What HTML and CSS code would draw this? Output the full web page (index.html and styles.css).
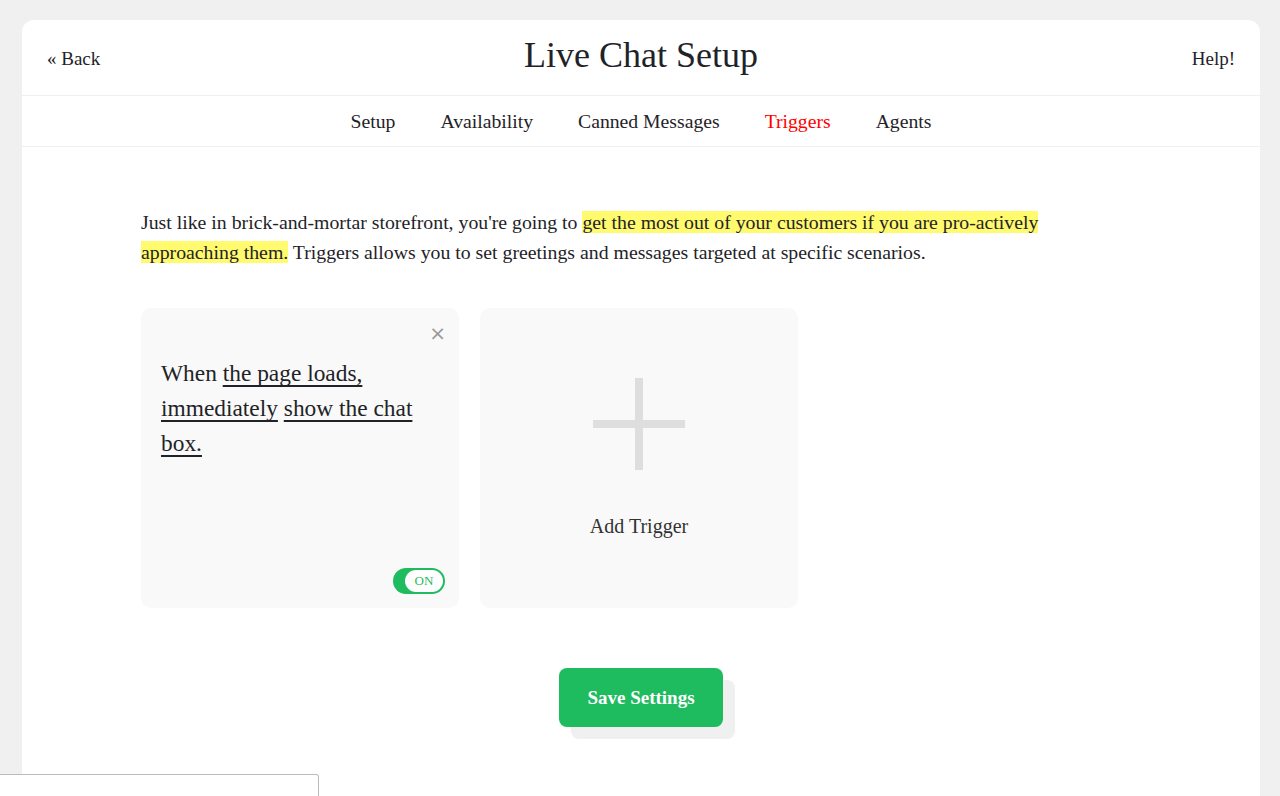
FILE: index.html
```html
<!DOCTYPE html>
<html>
<head>
<meta charset="utf-8">
<link rel="stylesheet" href="styles.css">
</head>
<body>
<div class="page">
  <div class="card">
    <header class="topbar">
      <a class="back">« Back</a>
      <h1 class="title">Live Chat Setup</h1>
      <a class="help">Help!</a>
    </header>
    <nav class="tabs">
      <a class="tab">Setup</a>
      <a class="tab">Availability</a>
      <a class="tab">Canned Messages</a>
      <a class="tab active">Triggers</a>
      <a class="tab">Agents</a>
    </nav>
    <main class="content">
      <p class="intro">Just like in brick-and-mortar storefront, you're going to <mark class="hl">get the most out of your customers if you are pro-actively</mark> <mark class="hl">approaching them.</mark> Triggers allows you to set greetings and messages targeted at specific scenarios.</p>
      <div class="triggers">
        <div class="trigger">
          <span class="close">×</span>
          <p class="rule">When <u class="ul">the page loads,</u> <u class="ul">immediately</u> <u class="ul">show the chat</u> <u class="ul">box.</u></p>
          <div class="toggle"><span class="toggle-label">ON</span></div>
        </div>
        <div class="trigger add">
          <svg class="plus" width="92" height="92" viewBox="0 0 92 92"><rect x="42" y="0" width="8" height="92" fill="#dedede"/><rect x="0" y="42" width="92" height="8" fill="#dedede"/></svg>
          <div class="add-label">Add Trigger</div>
        </div>
      </div>
      <div class="actions">
        <button class="save">Save Settings</button>
      </div>
    </main>
  </div>
  <div class="dock"></div>
</div>
</body>
</html>
```
FILE: styles.css
```css
html, body { margin: 0; padding: 0; }
body {
  background: #f0f0f0;
  font-family: "Liberation Serif", "DejaVu Serif", serif;
  color: #1f2328;
  height: 796px;
  overflow: hidden;
}
.page { padding: 20px 20px 0 22px; }
.card {
  background: #fff;
  border-radius: 12px 12px 0 0;
  min-height: 800px;
}
.topbar {
  height: 76px;
  display: flex;
  align-items: center;
  justify-content: space-between;
  padding: 3px 25px 0 25px;
  box-sizing: border-box;
  border-bottom: 1px solid #f0f0f0;
  position: relative;
}
.back, .help { font-size: 19px; color: #1f2328; cursor: pointer; }
.title {
  margin: 0;
  font-weight: normal;
  font-size: 36px;
  position: absolute;
  left: 0; right: 0;
  text-align: center;
  top: 14px;
  pointer-events: none;
}
.tabs {
  height: 50px;
  display: flex;
  justify-content: center;
  align-items: center;
  gap: 45px;
  border-bottom: 1px solid #f0f0f0;
  font-size: 19.7px;
}
.tab { color: #1f2328; }
.tab.active { color: #ff0000; }
.content { width: 1000px; margin: 0 auto; padding-top: 60px; }
.intro { margin: 0; font-size: 19.8px; line-height: 30px; }
.hl { background: #fffa6e; color: inherit; }
.triggers { display: flex; gap: 21px; margin-top: 41px; }
.trigger {
  width: 318px;
  height: 300px;
  background: #f9f9f9;
  border-radius: 10px;
  position: relative;
  box-sizing: border-box;
  padding: 48px 20px 0 20px;
}
.close {
  position: absolute;
  right: 13px; top: 13px;
  color: #999;
  font-family: "DejaVu Sans", sans-serif;
  font-size: 20px;
}
.rule { margin: 0; font-size: 23.4px; line-height: 35px; }
.ul {
  text-decoration: underline;
  text-decoration-thickness: 2px;
  text-underline-offset: 4px;
  text-decoration-skip-ink: none;
}
.toggle {
  position: absolute;
  right: 14px; bottom: 14px;
  width: 52px; height: 26px;
  border-radius: 13px;
  background: #1fbb5f;
  box-sizing: border-box;
  padding: 2px 2px 2px 12px;
  display: flex;
}
.toggle-label {
  flex: 1;
  background: #fff;
  border-radius: 11px;
  color: #1fbb5f;
  font-size: 13px;
  display: flex; align-items: center; justify-content: center;
}
.trigger.add {
  display: flex; flex-direction: column; align-items: center;
  padding-top: 70px;
}
.add-label { margin-top: 45px; font-size: 20px; color: #333; }
.actions { display: flex; justify-content: center; margin-top: 60px; }
.save {
  width: 164px; height: 59px;
  background: #1fbb5f;
  color: #fff;
  border: none;
  border-radius: 8px;
  font-family: inherit;
  font-weight: bold;
  font-size: 19px;
  box-shadow: 12px 12px 0 #f0f0f0;
}
.dock {
  position: fixed;
  left: 0; top: 774px;
  width: 318px; height: 40px;
  background: #fff;
  border: 1px solid #bbb;
  border-left: none;
  border-radius: 0 3px 0 0;
}
```
